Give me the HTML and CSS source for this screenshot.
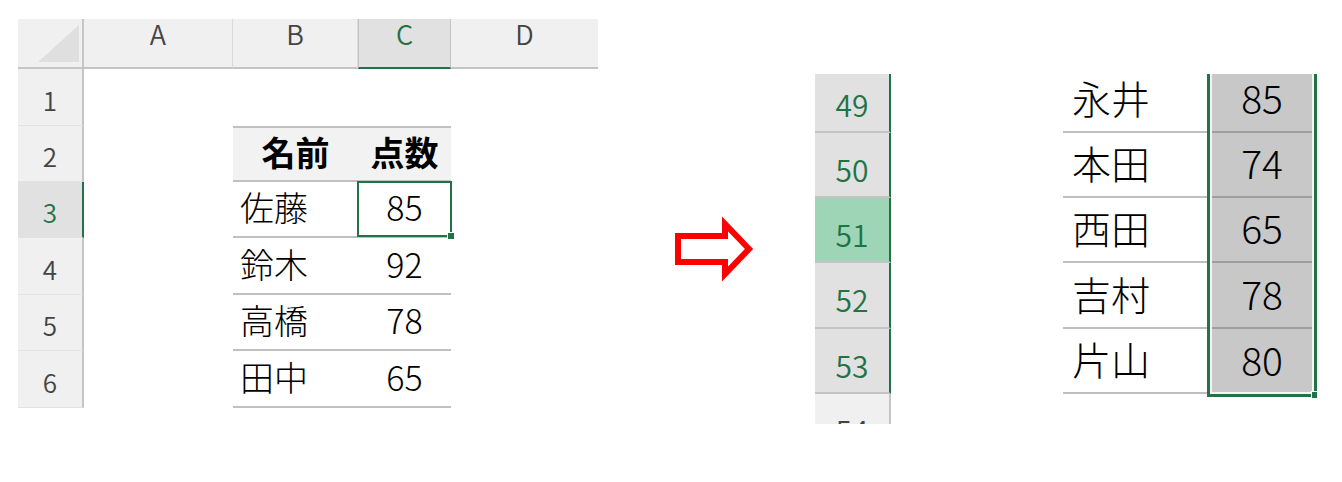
FILE: index.html
```html
<!DOCTYPE html>
<html lang="ja">
<head>
<meta charset="utf-8">
<title>Excel selection</title>
<link rel="stylesheet" href="styles.css">
</head>
<body>
<div class="page">
  <div class="sheet">
    <div class="corner"><svg width="64" height="48" viewBox="0 0 64 48"><polygon points="20,43 61,43 61,6" fill="#dfdfdf"/></svg></div>
    <div class="ch">A</div><div class="ch">B</div><div class="ch ch-sel">C</div><div class="ch ch-last">D</div>

    <div class="rh">1</div><div class="c"></div><div class="c"></div><div class="c"></div><div class="c"></div>

    <div class="rh">2</div><div class="c"></div><div class="c t th">名前</div><div class="c t th">点数</div><div class="c"></div>

    <div class="rh rh-sel">3</div><div class="c"></div><div class="c t name">佐藤</div><div class="c t num current">85<span class="sel-cell"><span class="handle"></span></span></div><div class="c"></div>

    <div class="rh">4</div><div class="c"></div><div class="c t name">鈴木</div><div class="c t num">92</div><div class="c"></div>

    <div class="rh">5</div><div class="c"></div><div class="c t name">高橋</div><div class="c t num">78</div><div class="c"></div>

    <div class="rh">6</div><div class="c"></div><div class="c t name">田中</div><div class="c t num">65</div><div class="c"></div>
  </div>

  <svg class="arrow" width="90" height="68" viewBox="0 0 90 68">
    <polygon points="8,21 55,21 55,9 79,34 55,59 55,47 8,47" fill="#fff" stroke="#ff0000" stroke-width="6" stroke-linejoin="miter"/>
  </svg>

  <div class="rwin">
    <div class="rinner">
      <div class="rheads">
        <div class="rrh sel">49</div>
        <div class="rrh sel">50</div>
        <div class="rrh active">51</div>
        <div class="rrh sel tall">52</div>
        <div class="rrh sel">53</div>
        <div class="rrh">54</div>
      </div>
      <div class="rtable">
        <div class="rnames">
          <div class="rn">永井</div>
          <div class="rn">本田</div>
          <div class="rn">西田</div>
          <div class="rn tall">吉村</div>
          <div class="rn">片山</div>
        </div>
        <div class="rvals">
          <div class="rv">85</div>
          <div class="rv">74</div>
          <div class="rv">65</div>
          <div class="rv tall">78</div>
          <div class="rv last">80</div>
          <span class="handle"></span>
        </div>
      </div>
    </div>
  </div>
</div>
</body>
</html>
```

FILE: styles.css
```css
* { box-sizing: border-box; }

html, body {
  margin: 0;
  padding: 0;
  background: #fff;
}

body {
  font-family: "Noto Sans CJK JP", "Noto Sans", sans-serif;
  color: #000;
}

.page {
  display: flex;
  align-items: flex-start;
  padding: 19px 0 0 18px;
  width: 1342px;
  height: 482px;
}

/* ---------- left sheet ---------- */
.sheet {
  display: grid;
  grid-template-columns: 66px 149px 125px 93px 147px;
  grid-template-rows: 50px 57px 56px 56px 57px 56px 57px;
  width: 580px;
  flex: none;
}

.corner {
  background: #f0f0f0;
  border-right: 2px solid #c6c6c6;
  border-bottom: 2px solid #c6c6c6;
}
.corner svg { display: block; }

.ch {
  background: #f0f0f0;
  border-right: 1px solid #d9d9d9;
  border-bottom: 2px solid #c4c4c4;
  display: flex;
  align-items: center;
  justify-content: center;
  font-size: 27px;
  font-weight: 350;
  line-height: 1;
  color: #444;
  padding-bottom: 20px;
}
.ch-last { border-right: none; }
.ch-sel {
  background: #e1e1e1;
  color: #217346;
  border-left: 1px solid #c4c4c4;
  border-right: 1px solid #c4c4c4;
  border-bottom: 2px solid #217346;
}

.rh {
  background: #f0f0f0;
  border-right: 2px solid #c4c4c4;
  border-bottom: 1px solid #e2e2e2;
  display: flex;
  align-items: center;
  justify-content: center;
  font-size: 26px;
  font-weight: 350;
  line-height: 1;
  color: #444;
  padding-top: 5px;
}
.rh-sel {
  background: #e1e1e1;
  color: #217346;
  border-right: 2px solid #217346;
}

.c {
  display: flex;
  align-items: center;
  font-size: 34px;
  font-weight: 300;
  line-height: 1;
}
.t {
  border-bottom: 2px solid #c0c0c0;
  padding-bottom: 4px;
}
.th {
  background: #f2f2f2;
  border-top: 2px solid #c0c0c0;
  font-weight: 700;
  justify-content: center;
}
.name { padding-left: 7px; }
.num { justify-content: center; }
.current { position: relative; }

.sel-cell {
  position: absolute;
  top: -1px;
  left: -1px;
  right: -1px;
  bottom: -1px;
  border: 2px solid #217346;
}
.handle {
  position: absolute;
  width: 8px;
  height: 8px;
  background: #217346;
  border: 1px solid #fff;
}
.sel-cell .handle {
  right: -5px;
  bottom: -5px;
}

/* ---------- arrow ---------- */
.arrow {
  display: block;
  margin: 196px 0 0 72px;
  flex: none;
}

/* ---------- right area ---------- */
.rwin {
  margin: 55px 0 0 55px;
  height: 350px;
  overflow: hidden;
  flex: none;
}
.rinner {
  display: flex;
  align-items: flex-start;
  margin-top: -6px;
}

.rheads {
  display: flex;
  flex-direction: column;
  width: 76px;
}
.rrh {
  height: 65px;
  background: #f0f0f0;
  border-right: 2px solid #c4c4c4;
  border-bottom: 2px solid #c4c4c4;
  display: flex;
  align-items: center;
  justify-content: center;
  font-size: 30px;
  font-weight: 350;
  line-height: 1;
  color: #444;
  padding-top: 8px;
}
.rrh.tall { height: 66px; }
.rrh.sel {
  background: #e1e1e1;
  color: #217346;
  border-right-color: #217346;
}
.rrh.active {
  background: #9fd5b7;
  color: #217346;
  border-right-color: #217346;
}

.rtable {
  margin-left: 172px;
  display: flex;
  align-items: flex-start;
}
.rnames {
  width: 144px;
  display: flex;
  flex-direction: column;
}
.rn, .rv {
  height: 65px;
  display: flex;
  align-items: center;
  font-size: 39px;
  font-weight: 300;
  line-height: 1;
  padding-bottom: 4px;
}
.rn.tall, .rv.tall { height: 66px; }
.rn {
  border-bottom: 2px solid #bfbfbf;
  padding-left: 9px;
}

.rvals {
  width: 110px;
  display: flex;
  flex-direction: column;
  border: 3px solid #217346;
  border-top: none;
  padding: 0 2px 2px;
  background: #f4f4f4;
  position: relative;
}
.rv {
  background: #c8c8c8;
  border-bottom: 2px solid #9e9e9e;
  justify-content: center;
}
.rv.last {
  height: 63px;
  border-bottom: none;
  padding-bottom: 2px;
}
.rvals .handle {
  right: -5px;
  bottom: -5px;
}
```
